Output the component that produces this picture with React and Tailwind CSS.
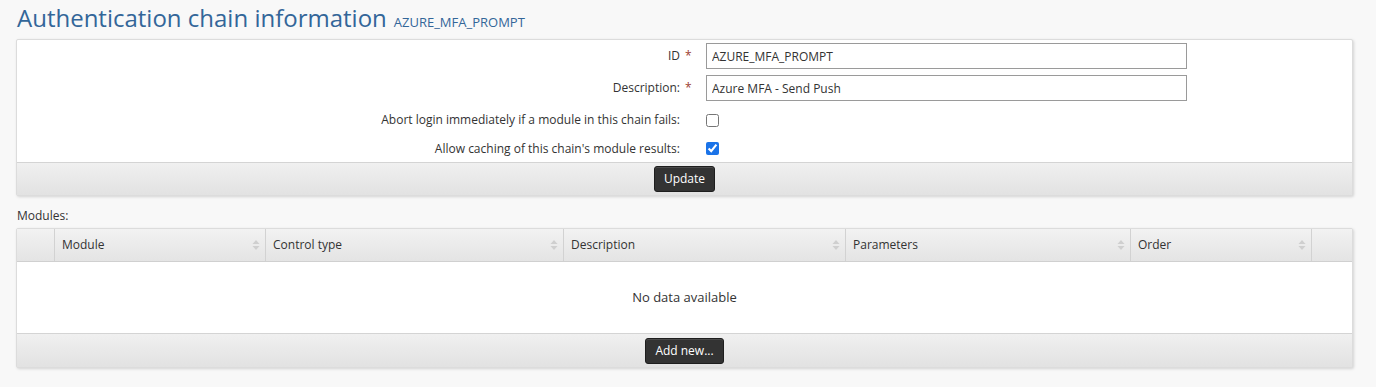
import React, { useState } from 'react';

const SortIcon = () => (
  <svg width="8" height="12" viewBox="0 0 8 12" className="shrink-0">
    <path d="M4 1 L7.5 5 L0.5 5 Z" fill="#cfcfcf" />
    <path d="M4 11 L7.5 7 L0.5 7 Z" fill="#cfcfcf" />
  </svg>
);

const columns = [
  { name: '', width: 'w-[38px]', sort: false },
  { name: 'Module', width: 'w-[211px]', sort: true },
  { name: 'Control type', width: 'w-[298px]', sort: true },
  { name: 'Description', width: 'w-[282px]', sort: true },
  { name: 'Parameters', width: 'w-[285px]', sort: true },
  { name: 'Order', width: 'w-[181px]', sort: true },
  { name: '', width: 'flex-1', sort: false },
];

const DarkButton = ({ children }) => (
  <button
    type="button"
    className="h-[26px] px-[9px] rounded-[3px] border border-[#1e1e1e] bg-[#333333] text-white text-[12px] leading-none shadow-[inset_0_1px_0_rgba(255,255,255,0.12)]"
  >
    {children}
  </button>
);

export default function App() {
  const [id, setId] = useState('AZURE_MFA_PROMPT');
  const [description, setDescription] = useState('Azure MFA - Send Push');
  const [abort, setAbort] = useState(false);
  const [caching, setCaching] = useState(true);

  return (
    <div className="min-h-[387px] bg-[#f8f8f8] text-[#333] font-['Open_Sans',sans-serif]">
      <div className="pl-[16px] pr-[23px]">
        <h1 className="h-[39px] pt-[3px] pl-[1px] flex items-baseline gap-[7px] text-[#336699]">
          <span className="text-[24px] leading-[30px]">Authentication chain information</span>
          <span className="text-[13px]">AZURE_MFA_PROMPT</span>
        </h1>

        <div className="bg-white border border-[#dcdcdc] rounded-[2px] shadow-[1px_1px_3px_rgba(0,0,0,0.15)]">
          <div className="pt-[3px] text-[12px]">
            <div className="flex items-center h-[26px] mb-[6px]">
              <label className="w-[663px] text-right">ID</label>
              <span className="w-[26px] pl-[5px] text-[#9b3b2e]">*</span>
              <input
                className="w-[481px] h-[26px] border border-[#9a9a9a] px-[5px] text-[12px] outline-none"
                value={id}
                onChange={(e) => setId(e.target.value)}
              />
            </div>
            <div className="flex items-center h-[26px]">
              <label className="w-[663px] text-right">Description:</label>
              <span className="w-[26px] pl-[5px] text-[#9b3b2e]">*</span>
              <input
                className="w-[481px] h-[26px] border border-[#9a9a9a] px-[5px] text-[12px] outline-none"
                value={description}
                onChange={(e) => setDescription(e.target.value)}
              />
            </div>
            <div className="flex items-center h-[33px] pt-[5px]">
              <label className="w-[663px] text-right">Abort login immediately if a module in this chain fails:</label>
              <span className="w-[26px]" />
              <input
                type="checkbox"
                className="w-[13px] h-[13px] m-0"
                checked={abort}
                onChange={(e) => setAbort(e.target.checked)}
              />
            </div>
            <div className="flex items-center h-[28px] pt-[1px]">
              <label className="w-[663px] text-right">Allow caching of this chain's module results:</label>
              <span className="w-[26px]" />
              <input
                type="checkbox"
                className="w-[13px] h-[13px] m-0 accent-[#1a73e8]"
                checked={caching}
                onChange={(e) => setCaching(e.target.checked)}
              />
            </div>
          </div>
          <div className="h-[33px] border-t border-[#d4d4d4] bg-gradient-to-b from-[#f0f0f0] to-[#e2e2e2] flex items-center justify-center">
            <DarkButton>Update</DarkButton>
          </div>
        </div>

        <div className="h-[32px] flex items-center pt-[8px] pl-[1px] text-[12px]">Modules:</div>

        <div className="bg-white border border-[#dcdcdc] rounded-[2px] shadow-[1px_1px_3px_rgba(0,0,0,0.15)] text-[12px]">
          <div className="flex h-[33px] bg-gradient-to-b from-[#f2f2f2] to-[#e4e4e4] border-b border-[#d0d0d0]">
            {columns.map((col, i) => (
              <div
                key={i}
                className={`${col.width} flex items-center justify-between pl-[7px] pr-[5px] ${i < columns.length - 1 ? 'border-r border-[#d2d2d2]' : ''}`}
              >
                <span>{col.name}</span>
                {col.sort && <SortIcon />}
              </div>
            ))}
          </div>
          <div className="h-[71px] flex items-center justify-center text-[13px]">No data available</div>
          <div className="h-[34px] border-t border-[#d4d4d4] bg-gradient-to-b from-[#f0f0f0] to-[#e2e2e2] flex items-center justify-center">
            <DarkButton>Add new...</DarkButton>
          </div>
        </div>
      </div>
    </div>
  );
}
